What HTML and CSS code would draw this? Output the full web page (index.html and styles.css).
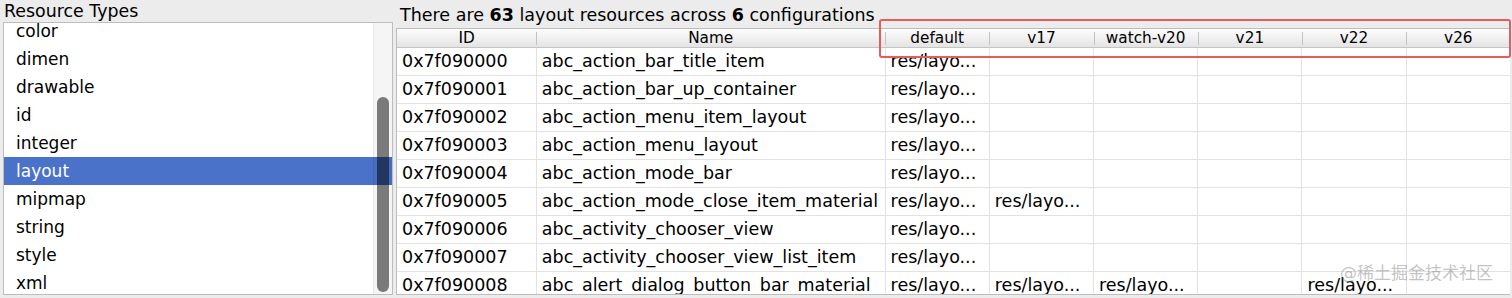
FILE: index.html
```html
<!DOCTYPE html>
<html>
  <head>
    <meta charset="utf-8" />
    <title>Resources</title>
    <link rel="stylesheet" href="styles.css">
  </head>
  <body>
    <div class="window">
      <!-- left: resource types -->
      <div class="types">
        <div class="types-title">Resource Types</div>
        <div class="types-box">
          <ul class="types-list">
            <li>color</li>
            <li>dimen</li>
            <li>drawable</li>
            <li>id</li>
            <li>integer</li>
            <li class="selected">layout</li>
            <li>mipmap</li>
            <li>string</li>
            <li>style</li>
            <li>xml</li>
          </ul>
          <div class="scrollbar"><div class="thumb"></div></div>
        </div>
      </div>
      <!-- right: resource table -->
      <div class="resources">
        <div class="summary">There are <b>63</b> layout resources across <b>6</b> configurations</div>
        <div class="table-box">
          <table class="res-table">
            <colgroup>
              <col class="c-id">
              <col class="c-name">
              <col class="c-cfg">
              <col class="c-cfg">
              <col class="c-cfg">
              <col class="c-cfg">
              <col class="c-cfg">
              <col class="c-cfg">
            </colgroup>
            <thead>
              <tr>
                <th>ID</th>
                <th>Name</th>
                <th>default</th>
                <th>v17</th>
                <th>watch-v20</th>
                <th>v21</th>
                <th>v22</th>
                <th>v26</th>
              </tr>
            </thead>
            <tbody>
              <tr><td>0x7f090000</td><td>abc_action_bar_title_item</td><td>res/layo...</td><td></td><td></td><td></td><td></td><td></td></tr>
              <tr><td>0x7f090001</td><td>abc_action_bar_up_container</td><td>res/layo...</td><td></td><td></td><td></td><td></td><td></td></tr>
              <tr><td>0x7f090002</td><td>abc_action_menu_item_layout</td><td>res/layo...</td><td></td><td></td><td></td><td></td><td></td></tr>
              <tr><td>0x7f090003</td><td>abc_action_menu_layout</td><td>res/layo...</td><td></td><td></td><td></td><td></td><td></td></tr>
              <tr><td>0x7f090004</td><td>abc_action_mode_bar</td><td>res/layo...</td><td></td><td></td><td></td><td></td><td></td></tr>
              <tr><td>0x7f090005</td><td>abc_action_mode_close_item_material</td><td>res/layo...</td><td>res/layo...</td><td></td><td></td><td></td><td></td></tr>
              <tr><td>0x7f090006</td><td>abc_activity_chooser_view</td><td>res/layo...</td><td></td><td></td><td></td><td></td><td></td></tr>
              <tr><td>0x7f090007</td><td>abc_activity_chooser_view_list_item</td><td>res/layo...</td><td></td><td></td><td></td><td></td><td></td></tr>
              <tr><td>0x7f090008</td><td>abc_alert_dialog_button_bar_material</td><td>res/layo...</td><td>res/layo...</td><td>res/layo...</td><td></td><td>res/layo...</td><td></td></tr>
            </tbody>
          </table>
        </div>
      </div>
    </div>
    <!-- annotation + watermark -->
    <div class="highlight"></div>
    <div class="watermark">@稀土掘金技术社区</div>
  </body>
</html>
```

FILE: styles.css
```css
body {
  margin: 0;
  padding: 0;
  background-color: #ececec;
  font-family: "DejaVu Sans", "Noto Sans CJK SC", sans-serif;
  color: #000;
}
.window {
  display: flex;
  height: 298px;
  overflow: hidden;
}

/* left panel */
.types {
  width: 393px;
  display: flex;
  flex-direction: column;
}
.types-title {
  height: 22px;
  line-height: 22px;
  padding-left: 4px;
  font-size: 17.4px;
  white-space: nowrap;
}
.types-box {
  position: relative;
  height: 273px;
  box-sizing: border-box;
  margin-left: 3px;
  border: 1px solid #bdbdbd;
  background-color: #fff;
  overflow: hidden;
}
.types-list {
  list-style: none;
  margin: -6px 0 0 0;
  padding: 0;
}
.types-list li {
  height: 28px;
  line-height: 28px;
  padding-left: 12px;
  font-size: 17px;
}
.types-list li.selected {
  background-color: #4a72c9;
  color: #fff;
}
.scrollbar {
  position: absolute;
  top: 0;
  right: 0;
  bottom: 0;
  width: 18px;
  background-color: rgba(0, 0, 0, 0.04);
  border-left: 1px solid rgba(0, 0, 0, 0.05);
}
.thumb {
  margin-top: 74px;
  margin-left: 3px;
  width: 12px;
  height: 195px;
  border-radius: 6px;
  background-color: rgba(0, 0, 0, 0.5);
}

/* right panel */
.resources {
  flex: 1;
  margin-left: 3px;
  display: flex;
  flex-direction: column;
}
.summary {
  height: 28px;
  line-height: 30px;
  padding-left: 4px;
  font-size: 17.5px;
  white-space: nowrap;
}
.table-box {
  width: 1114px;
  height: 267px;
  box-sizing: border-box;
  border: 1px solid #bdbdbd;
  border-right: none;
  background-color: #fff;
  overflow: hidden;
}
.res-table {
  table-layout: fixed;
  border-collapse: collapse;
  width: 1114px;
}
.c-id { width: 139px; }
.c-name { width: 348px; }
.c-cfg { width: 104px; }
.res-table th {
  position: relative;
  height: 18px;
  padding: 0;
  font-size: 15.3px;
  font-weight: normal;
  line-height: 18px;
  background: linear-gradient(#fdfdfd, #e4e4e4);
  border-bottom: 1px solid #c4c4c4;
}
.res-table th + th::before {
  content: "";
  position: absolute;
  left: 0;
  top: 3px;
  bottom: 2px;
  width: 1px;
  background-color: #c2c2c2;
}
.res-table td {
  height: 27px;
  padding: 0 0 0 5px;
  font-size: 17.5px;
  line-height: 27px;
  white-space: nowrap;
  overflow: hidden;
  border-right: 1px solid #e2e2e2;
  border-bottom: 1px solid #e2e2e2;
}

/* overlays */
.highlight {
  position: absolute;
  left: 879px;
  top: 19px;
  width: 632px;
  height: 39px;
  box-sizing: border-box;
  border: 2px solid #e25d5d;
  border-radius: 3px;
}
.watermark {
  position: absolute;
  left: 1340px;
  top: 262px;
  font-size: 17px;
  line-height: 22px;
  color: rgba(120, 120, 120, 0.45);
  white-space: nowrap;
}
```
